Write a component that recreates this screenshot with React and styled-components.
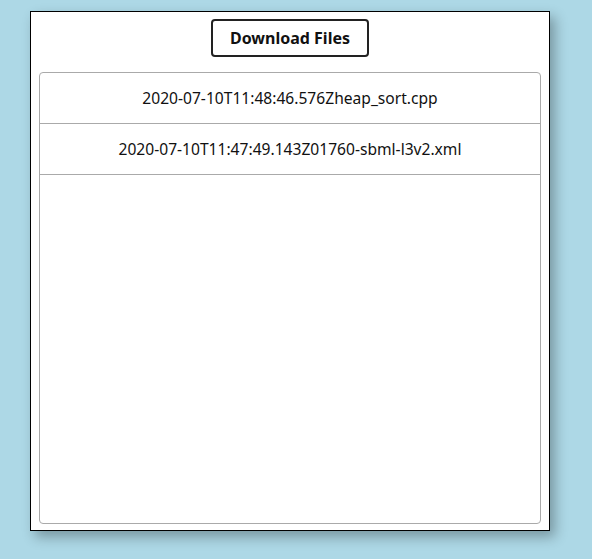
import React from 'react';
import styled, { createGlobalStyle } from 'styled-components';

const GlobalStyle = createGlobalStyle`
    html, body {
        margin: 0;
        padding: 0;
        background-color: #add8e6;
        font-family: 'Noto Sans', 'Open Sans', sans-serif;
    }
`

const Page = styled.div`
    padding: 11px 0 0 30px;
    min-height: 548px;
`

const Card = styled.div`
    box-sizing: border-box;
    width: 520px;
    height: 520px;
    background-color: white;
    border: 1px solid black;
    box-shadow: 5px 6px 12px rgba(0, 0, 0, 0.3);
    padding: 7px 8px 6px 8px;
    display: flex;
    flex-direction: column;
    align-items: center;
`

const Button = styled.button`
    box-sizing: border-box;
    height: 38px;
    width: 158px;
    padding: 0 12px;
    font-family: inherit;
    font-size: 16px;
    font-weight: bold;
    color: #111;
    background-color: white;
    border: 2px solid #222;
    border-radius: 4px;
    cursor: pointer;
`

const List = styled.ul`
    box-sizing: border-box;
    list-style: none;
    margin: 15px 0 0 0;
    padding: 0;
    width: 100%;
    flex: 1;
    border: 1px solid #aaa;
    border-radius: 4px;
    overflow: hidden;
`

const Item = styled.li`
    height: 51px;
    display: flex;
    align-items: center;
    justify-content: center;
    border-bottom: 1px solid #aaa;
    font-size: 15.6px;
    color: #111;
    box-sizing: border-box;
`

const files = [
    '2020-07-10T11:48:46.576Zheap_sort.cpp',
    '2020-07-10T11:47:49.143Z01760-sbml-l3v2.xml',
];

export default function App() {
    return (
        <Page>
            <GlobalStyle />
            <Card>
                <Button>Download Files</Button>
                <List>
                    {files.map(f => (
                        <Item key={f}>{f}</Item>
                    ))}
                </List>
            </Card>
        </Page>
    )
}
